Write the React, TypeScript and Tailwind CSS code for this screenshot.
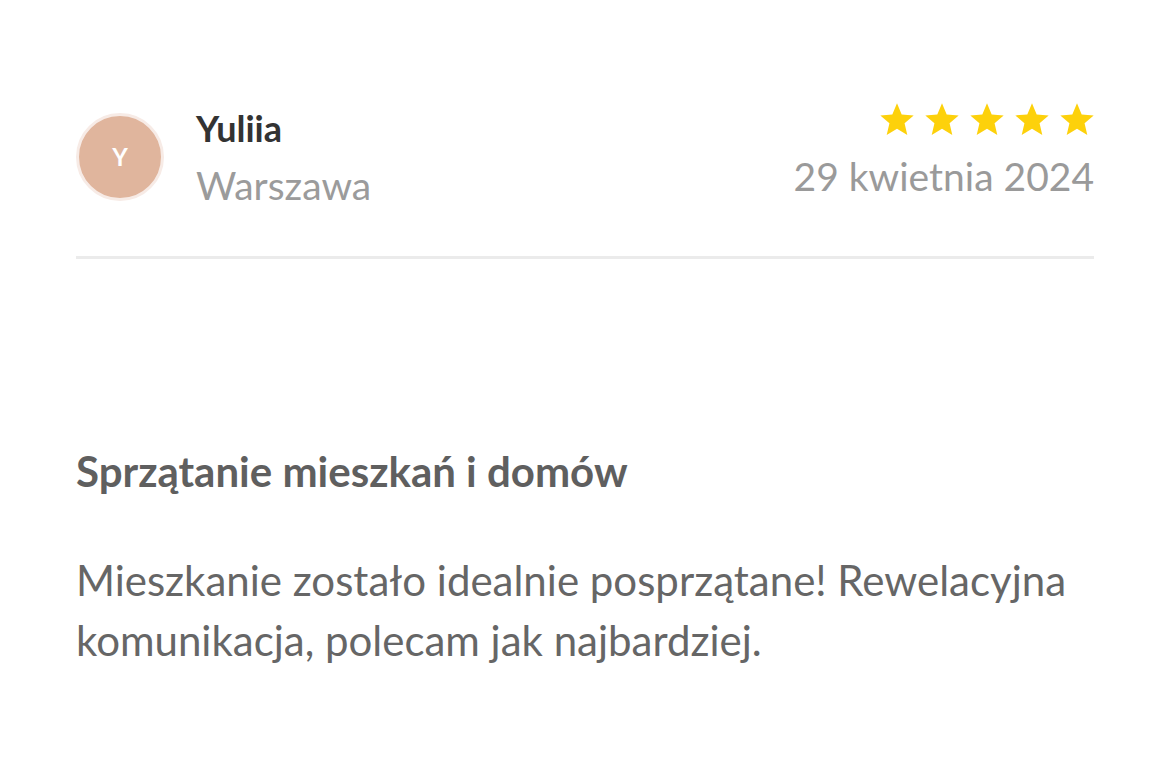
import React from 'react';

const review = {
  initial: 'Y',
  name: 'Yuliia',
  city: 'Warszawa',
  date: '29 kwietnia 2024',
  rating: 5,
  service: 'Sprzątanie mieszkań i domów',
  text: 'Mieszkanie zostało idealnie posprzątane! Rewelacyjna komunikacja, polecam jak najbardziej.',
};

const Star = () => (
  <svg viewBox="0 0 24 24" className="w-10 h-10" fill="#fdd10b">
    <path d="M12 17.27L18.18 21l-1.64-7.03L22 9.24l-7.19-.61L12 2 9.19 8.63 2 9.24l5.46 4.73L5.82 21z" />
  </svg>
);

export default function App() {
  return (
    <div className="min-h-screen bg-white font-['Lato','Liberation_Sans',sans-serif]">
      <div className="pl-[76px] pr-[75px] pt-[100px]">
        {/* Header */}
        <div className="flex items-start justify-between">
          <div className="flex items-start gap-8 mt-[5px]">
            <div className="w-[88px] h-[88px] mt-[8px] rounded-full bg-[#e0b59d] border-[3px] border-[#f7ebe6] flex items-center justify-center">
              <span className="text-white font-bold text-[24px] leading-none">{review.initial}</span>
            </div>
            <div className="flex flex-col pt-[2px]">
              <span className="text-[36px] leading-[43px] font-bold text-[#333333]">{review.name}</span>
              <span className="text-[39px] leading-[47px] text-[#9b9b9b] mt-3">{review.city}</span>
            </div>
          </div>
          <div className="flex flex-col items-end">
            <div className="flex gap-[5px] -mr-[3px]">
              {Array.from({ length: review.rating }).map((_, i) => (
                <Star key={i} />
              ))}
            </div>
            <span className="text-[39px] leading-[47px] text-[#9a9a9a] mt-[13px]">{review.date}</span>
          </div>
        </div>

        <div className="h-[3px] bg-[#ebebeb] mt-[47px]" />

        {/* Body */}
        <h3 className="mt-[187px] text-[42px] leading-[50px] font-bold text-[#5f5f5f]">
          {review.service}
        </h3>
        <p className="mt-[54px] text-[42px] leading-[60px] text-[#666666]">{review.text}</p>
      </div>
    </div>
  );
}
